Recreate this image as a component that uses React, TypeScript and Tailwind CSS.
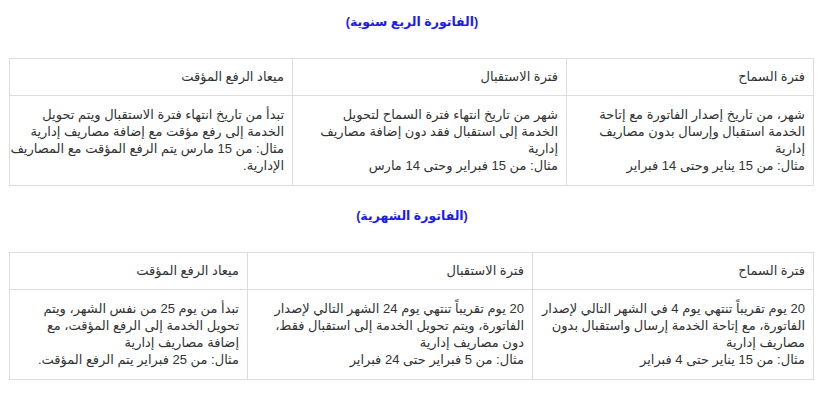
type Tbl = {
  title: string;
  widths: string[];
  headers: string[];
  cells: string[][];
};

const tables: Tbl[] = [
  {
    title: "(الفاتورة الربع سنوية)",
    widths: ["w-[247px]", "w-[274px]", "w-[283px]"],
    headers: ["فترة السماح", "فترة الاستقبال", "ميعاد الرفع المؤقت"],
    cells: [
      [
        "شهر، من تاريخ إصدار الفاتورة مع إتاحة",
        "الخدمة استقبال وإرسال بدون مصاريف",
        "إدارية",
        "مثال: من 15 يناير وحتى 14 فبراير",
      ],
      [
        "شهر من تاريخ انتهاء فترة السماح لتحويل",
        "الخدمة إلى استقبال فقد دون إضافة مصاريف",
        "إدارية",
        "مثال: من 15 فبراير وحتى 14 مارس",
      ],
      [
        "تبدأ من تاريخ انتهاء فترة الاستقبال ويتم تحويل",
        "الخدمة إلى رفع مؤقت مع إضافة مصاريف إدارية",
        "مثال: من 15 مارس يتم الرفع المؤقت مع المصاريف",
        "الإدارية.",
      ],
    ],
  },
  {
    title: "(الفاتورة الشهرية)",
    widths: ["w-[281px]", "w-[285px]", "w-[238px]"],
    headers: ["فترة السماح", "فترة الاستقبال", "ميعاد الرفع المؤقت"],
    cells: [
      [
        "20 يوم تقريباً تنتهي يوم 4 في الشهر التالي لإصدار",
        "الفاتورة، مع إتاحة الخدمة إرسال واستقبال بدون",
        "مصاريف إدارية",
        "مثال: من 15 يناير حتى 4 فبراير",
      ],
      [
        "20 يوم تقريباً تنتهي يوم 24 الشهر التالي لإصدار",
        "الفاتورة، ويتم تحويل الخدمة إلى استقبال فقط،",
        "دون مصاريف إدارية",
        "مثال: من 5 فبراير حتى 24 فبراير",
      ],
      [
        "تبدأ من يوم 25 من نفس الشهر، ويتم",
        "تحويل الخدمة إلى الرفع المؤقت، مع",
        "إضافة مصاريف إدارية",
        "مثال: من 25 فبراير يتم الرفع المؤقت.",
      ],
    ],
  },
];

function Table({ t, first }: { t: Tbl; first: boolean }) {
  return (
    <div className={first ? "" : "mt-[20px]"}>
      <h2 className="text-center text-[12.5px] font-bold leading-[20px] text-[#1a1aff]">
        {t.title}
      </h2>
      <table className="mt-[26px] w-[804px] table-fixed border-collapse border border-[#dddddd]">
        <thead>
          <tr>
            {t.headers.map((h, i) => (
              <th
                key={i}
                className={`${t.widths[i]} border border-[#dddddd] px-[8px] pt-[9px] pb-[9px] text-right align-top font-normal leading-[18px]`}
              >
                {h}
              </th>
            ))}
          </tr>
        </thead>
        <tbody>
          <tr>
            {t.cells.map((lines, i) => (
              <td
                key={i}
                className="border border-[#dddddd] px-[8px] pt-[10px] pb-[11px] text-right align-top leading-[17px]"
              >
                {lines.map((l, j) => (
                  <div key={j} className="whitespace-nowrap">
                    {l}
                  </div>
                ))}
              </td>
            ))}
          </tr>
        </tbody>
      </table>
    </div>
  );
}

export default function App() {
  return (
    <div
      dir="rtl"
      className="min-h-[405px] bg-white pr-[19px] pt-[12px] text-[13px] text-[#333333]"
      style={{ fontFamily: "'Liberation Sans', 'DejaVu Sans', sans-serif" }}
    >
      <div className="w-[804px]">
        {tables.map((t, i) => (
          <Table key={i} t={t} first={i === 0} />
        ))}
      </div>
    </div>
  );
}
